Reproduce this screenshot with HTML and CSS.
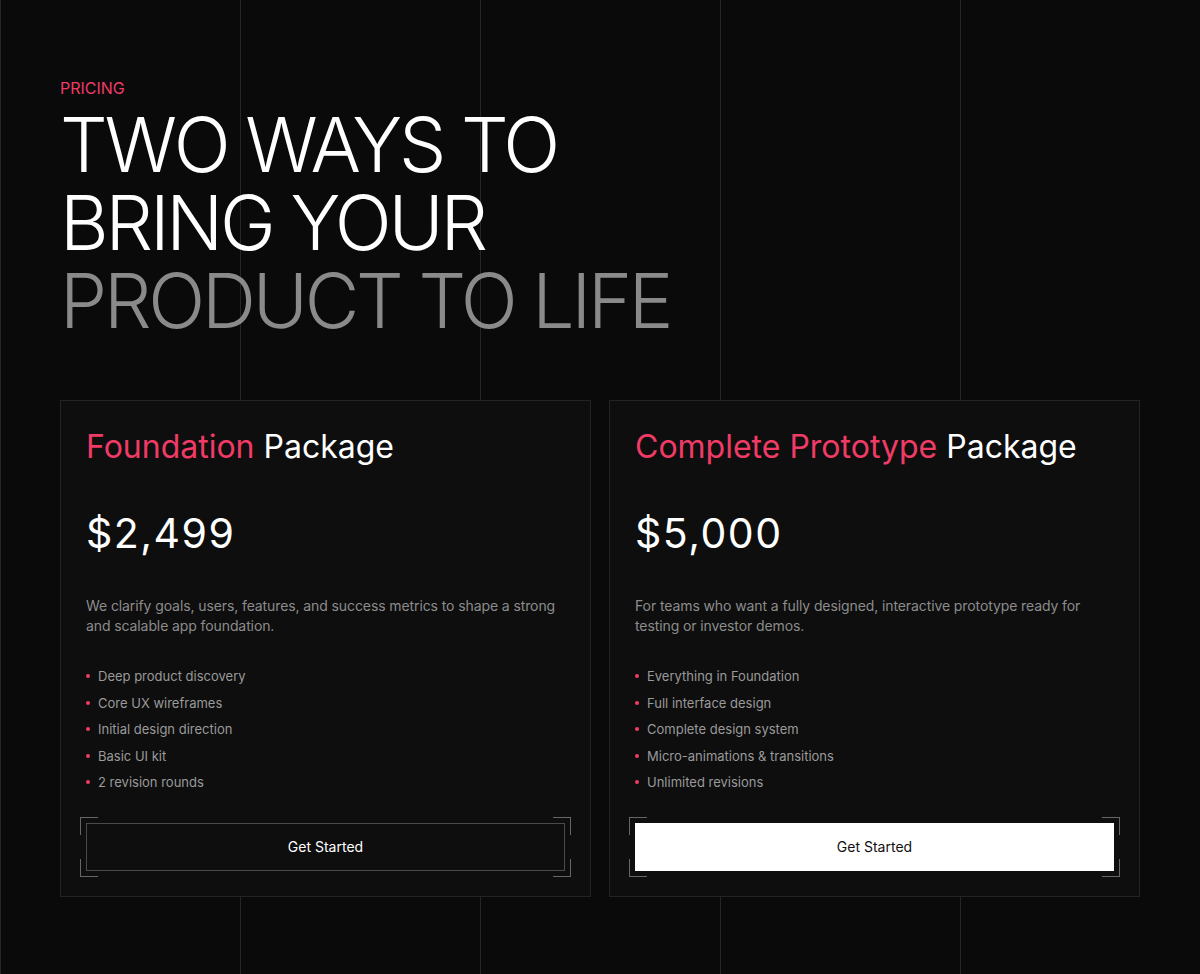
FILE: index.html
```html
<!DOCTYPE html>
<html lang="en">

<head>
  <meta charset="utf-8">
  <title>Pricing</title>

  <link rel="stylesheet" href="styles.css">
</head>

<body>
  <section class="pricing">
    <p class="eyebrow">PRICING</p>
    <h1 class="headline">
      <span>TWO WAYS TO</span>
      <span>BRING YOUR</span>
      <span class="muted">PRODUCT TO LIFE</span>
    </h1>

    <div class="plans">
      <div class="plan">
        <h2 class="plan-name"><span class="accent">Foundation</span> Package</h2>
        <div class="price">$2,499</div>
        <p class="desc">We clarify goals, users, features, and success metrics to shape a strong and scalable app foundation.</p>
        <ul class="features">
          <li>Deep product discovery</li>
          <li>Core UX wireframes</li>
          <li>Initial design direction</li>
          <li>Basic UI kit</li>
          <li>2 revision rounds</li>
        </ul>
        <div class="btn-wrap">
          <i class="corner tl"></i><i class="corner tr"></i><i class="corner bl"></i><i class="corner br"></i>
          <button class="btn">Get Started</button>
        </div>
      </div>

      <div class="plan">
        <h2 class="plan-name"><span class="accent">Complete Prototype</span> Package</h2>
        <div class="price">$5,000</div>
        <p class="desc">For teams who want a fully designed, interactive prototype ready for testing or investor demos.</p>
        <ul class="features">
          <li>Everything in Foundation</li>
          <li>Full interface design</li>
          <li>Complete design system</li>
          <li>Micro-animations &amp; transitions</li>
          <li>Unlimited revisions</li>
        </ul>
        <div class="btn-wrap">
          <i class="corner tl"></i><i class="corner tr"></i><i class="corner bl"></i><i class="corner br"></i>
          <button class="btn solid">Get Started</button>
        </div>
      </div>
    </div>
  </section>
</body>

</html>
```

FILE: styles.css
```css
html,
body {
  margin: 0;
  min-height: 100%;
}

body {
  background-color: #0a0a0a;
  /* grid columns every 240px */
  background-image: linear-gradient(90deg, transparent 239px, #262626 239px);
  background-size: 240px 100%;
  background-position: 1px 0;
  font-family: Inter, "Noto Sans", sans-serif;
  color: #fff;
  min-height: 974px;
}

.pricing {
  padding: 78px 60px 0;
}

.eyebrow {
  margin: 0;
  color: #f03b66;
  font-size: 16px;
  font-weight: 400;
  line-height: 20px;
}

.headline {
  margin: 8px 0 0;
  font-size: 75px;
  font-weight: 300;
  line-height: 78px;
  letter-spacing: -3.2px;
}

.headline span {
  display: block;
}

.headline .muted {
  color: #8a8a8a;
}

.plans {
  display: grid;
  grid-template-columns: 1fr 1fr;
  gap: 18px;
  margin-top: 60px;
}

.plan {
  background: #0e0e0e;
  border: 1px solid #232323;
  padding: 26px 25px 24px;
}

.plan-name {
  margin: 0;
  font-size: 32px;
  font-weight: 400;
  line-height: 40px;
}

.accent {
  color: #f03b66;
}

.price {
  margin-top: 42px;
  font-size: 41px;
  font-weight: 400;
  line-height: 48px;
  letter-spacing: 1.5px;
}

.desc {
  margin: 39px 0 0;
  color: #8c8c8c;
  font-size: 14px;
  line-height: 20px;
  letter-spacing: -0.1px;
}

.features {
  list-style: none;
  margin: 27px 0 0;
  padding: 0;
}

.features li {
  position: relative;
  padding-left: 12px;
  color: #9a9a9a;
  font-size: 13px;
  line-height: 26.5px;
}

.features li::before {
  content: "";
  position: absolute;
  left: 0;
  top: 11px;
  width: 4px;
  height: 4px;
  border-radius: 50%;
  background: #f03b66;
}

.btn-wrap {
  position: relative;
  margin-top: 27px;
  margin-bottom: 1px;
}

.btn {
  display: block;
  width: 100%;
  height: 48px;
  background: #0e0e0e;
  border: 1px solid #4a4a4a;
  color: #fff;
  font-family: inherit;
  font-size: 14px;
  cursor: pointer;
}

.btn.solid {
  background: #fff;
  border-color: #fff;
  color: #111;
}

.corner {
  position: absolute;
  width: 17px;
  height: 17px;
  border: 0 solid #666;
}

.corner.tl {
  top: -6px;
  left: -6px;
  border-top-width: 1px;
  border-left-width: 1px;
}

.corner.tr {
  top: -6px;
  right: -6px;
  border-top-width: 1px;
  border-right-width: 1px;
}

.corner.bl {
  bottom: -6px;
  left: -6px;
  border-bottom-width: 1px;
  border-left-width: 1px;
}

.corner.br {
  bottom: -6px;
  right: -6px;
  border-bottom-width: 1px;
  border-right-width: 1px;
}
```
